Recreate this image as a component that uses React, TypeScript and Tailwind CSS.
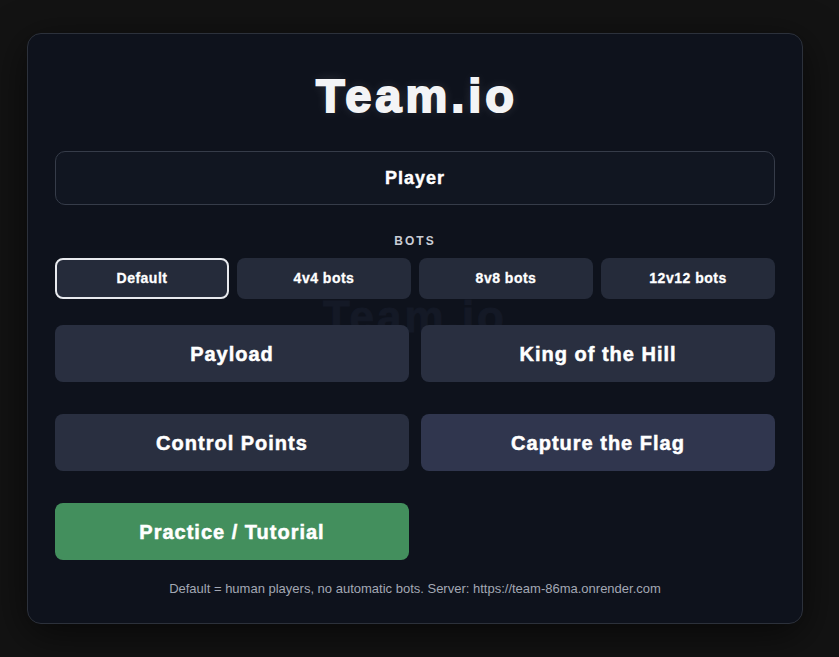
import React from "react"

const bots = ["Default", "4v4 bots", "8v8 bots", "12v12 bots"]
const modes = [
  { label: "Payload", cls: "bg-[#292f40]" },
  { label: "King of the Hill", cls: "bg-[#292f40]" },
  { label: "Control Points", cls: "bg-[#292f40]" },
  { label: "Capture the Flag", cls: "bg-[#30364e]" },
]

export default function App() {
  return (
    <div className="min-h-screen w-full bg-[#131313] pt-[33px] pl-[27px] font-['Liberation_Sans',Arial,sans-serif]">
      <div className="relative w-[776px] h-[591px] rounded-[14px] border border-[#2c313b] bg-[#0e121c] shadow-[0_10px_40px_rgba(0,0,0,0.6)] px-[27px] pt-[34px] overflow-hidden">
        {/* faint watermark */}
        <div className="pointer-events-none absolute left-0 right-0 top-[261px] text-center text-[44px] leading-[44px] font-bold tracking-[3px] text-[#141926] [-webkit-text-stroke:1px_#141926] select-none">
          Team.io
        </div>

        <div className="relative flex flex-col">
          <h1 className="h-[56px] text-center text-[47px] leading-[56px] font-bold tracking-[4px] text-[#f3f4f6] [-webkit-text-stroke:2px_#f3f4f6] [text-shadow:0_0_12px_rgba(255,255,255,0.15)] translate-x-[2px]">
            Team.io
          </h1>

          <div className="mt-[27px] h-[54px] rounded-[10px] border border-[#363c49] bg-[#111621] flex items-center justify-center">
            <span className="text-[18px] font-bold tracking-[1px] text-white [-webkit-text-stroke:0.4px_white]">Player</span>
          </div>

          <div className="mt-[28px] h-[16px] text-center text-[12px] leading-[16px] font-bold tracking-[2px] text-[#c9cdd6]">
            BOTS
          </div>

          <div className="mt-[9px] grid grid-cols-4 gap-[8px]">
            {bots.map((b, i) => (
              <button
                key={b}
                className={
                  "h-[41px] rounded-[8px] bg-[#252b3a] text-[14px] font-bold tracking-[0.5px] text-white [-webkit-text-stroke:0.3px_white] " +
                  (i === 0 ? "border-2 border-[#e8eaee]" : "")
                }
              >
                {b}
              </button>
            ))}
          </div>

          <div className="mt-[26px] grid grid-cols-2 gap-x-[12px] gap-y-[32px]">
            {modes.map((m) => (
              <button
                key={m.label}
                className={"h-[57px] rounded-[8px] text-[20px] font-bold tracking-[1px] text-white [-webkit-text-stroke:0.5px_white] " + m.cls}
              >
                {m.label}
              </button>
            ))}
            <button className="h-[57px] rounded-[8px] bg-[#438f5d] text-[20px] font-bold tracking-[1px] text-white [-webkit-text-stroke:0.5px_white]">
              Practice / Tutorial
            </button>
          </div>

          <p className="mt-[21px] text-center text-[13px] leading-[16px] text-[#a3a8b4]">
            Default = human players, no automatic bots. Server: https://team-86ma.onrender.com
          </p>
        </div>
      </div>
    </div>
  )
}
